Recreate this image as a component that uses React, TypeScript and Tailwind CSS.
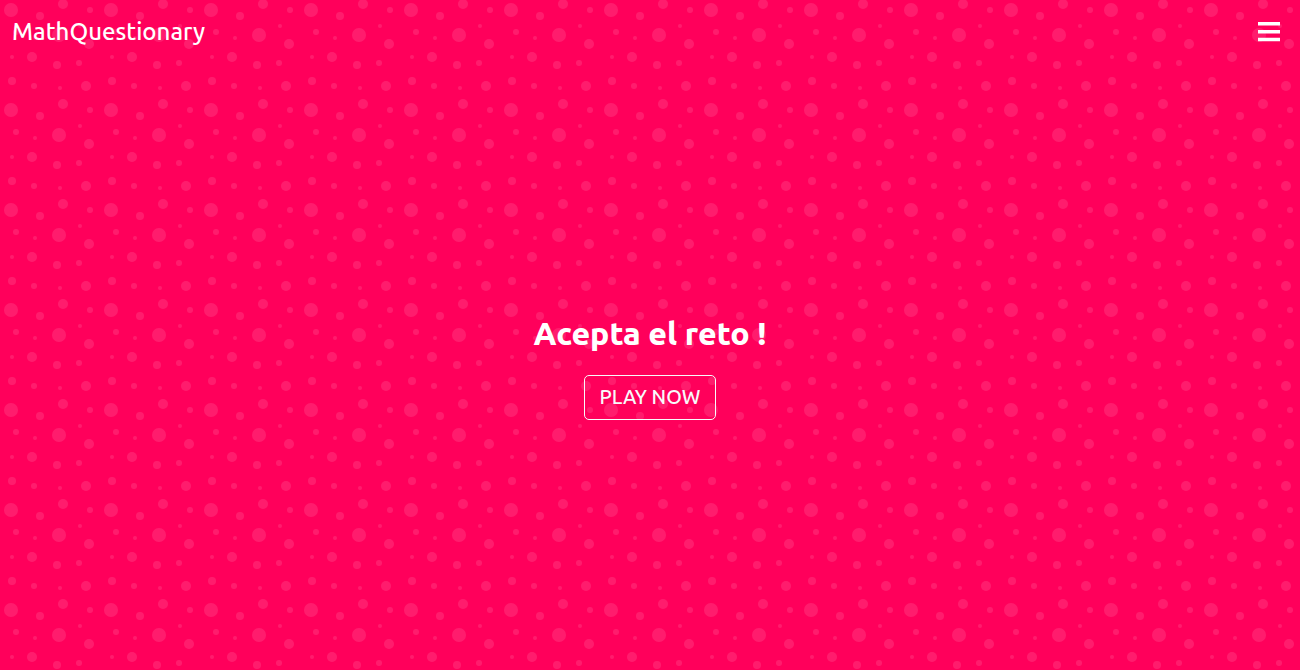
const dots: [number, number, number][] = [
  [11, 10, 7],
  [59, 35, 7],
  [63, 4, 5],
  [86, 86, 5],
  [32, 57, 5],
  [89, 44, 5],
  [12, 81, 4],
  [40, 16, 4],
  [57, 65, 4],
  [16, 32, 3],
  [79, 63, 3],
  [34, 86, 3],
  [90, 10, 3],
  [80, 26, 2],
  [60, 88, 2],
  [35, 38, 2],
  [12, 57, 2],
  [63, 104, 5],
];

function Bubbles() {
  return (
    <svg aria-hidden="true" className="absolute inset-0 -z-10 h-full w-full">
      <defs>
        <pattern id="bubbles" width="100" height="100" patternUnits="userSpaceOnUse">
          {dots.map(([x, y, r]) => (
            <circle key={`${x}-${y}`} cx={x} cy={y} r={r} fill="#fff" fillOpacity="0.11" />
          ))}
        </pattern>
      </defs>
      <rect width="100%" height="100%" fill="url(#bubbles)" />
    </svg>
  );
}

export default function App() {
  return (
    <div className="relative isolate flex min-h-screen flex-col overflow-hidden bg-[#ff005b] font-['Ubuntu','Noto_Sans',sans-serif] text-white">
      <Bubbles />
      <header className="flex h-16 items-center justify-between pr-5 pl-3">
        <a href="#" className="text-2xl font-medium">
          MathQuestionary
        </a>
        <button type="button" aria-label="Menu" className="cursor-pointer">
          <svg width="22" height="20" viewBox="0 0 22 20" fill="currentColor" aria-hidden="true">
            <path d="M0 0h22v3.5H0zM0 8h22v3.5H0zM0 15.7h22v3.5H0z" />
          </svg>
        </button>
      </header>
      <main className="flex flex-1 flex-col items-center justify-center gap-6">
        <h1 className="text-[32px] leading-9 font-extrabold">Acepta el reto !</h1>
        <button
          type="button"
          className="cursor-pointer rounded-[5px] border border-[#f8f9fa] px-[15px] pt-[7px] pb-[9px] text-xl leading-[27px] font-medium text-[#f8f9fa]"
        >
          PLAY NOW
        </button>
      </main>
    </div>
  );
}
